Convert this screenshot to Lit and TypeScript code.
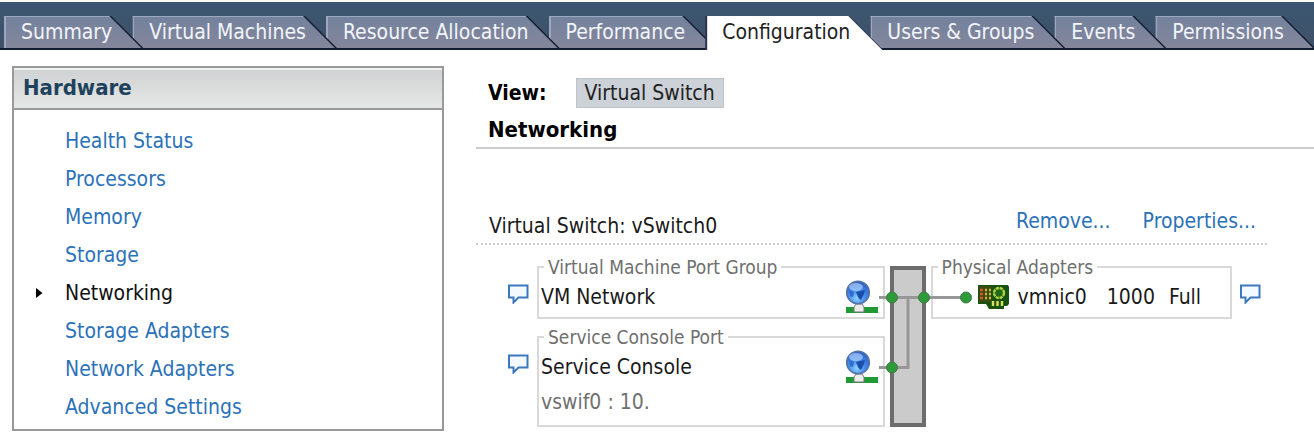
import { LitElement, html, css, svg } from "lit";
import { customElement, property, state } from "lit/decorators.js";
import { classMap } from "lit/directives/class-map.js";

const TABS = [
  "Summary",
  "Virtual Machines",
  "Resource Allocation",
  "Performance",
  "Configuration",
  "Users & Groups",
  "Events",
  "Permissions",
];

const HARDWARE = [
  "Health Status",
  "Processors",
  "Memory",
  "Storage",
  "Networking",
  "Storage Adapters",
  "Network Adapters",
  "Advanced Settings",
];

@customElement("tab-strip")
export class TabStrip extends LitElement {
  @property() selected = "Configuration";

  static styles = css`
    :host {
      display: block;
      padding-top: 14px;
      background: linear-gradient(#3b5671, #405168);
      overflow: hidden;
    }
    .strip {
      display: flex;
      padding-left: 4px;
      box-shadow: inset 0 -2px #151d30;
    }
    .tab {
      position: relative;
      isolation: isolate;
      flex: none;
      height: 34px;
      margin: 0 -13px 0 0;
      padding: 0 33px 2px 17px;
      border: 0;
      background: #151d30;
      color: #f2f5fa;
      font: inherit;
      line-height: 32px;
      white-space: nowrap;
      clip-path: polygon(0 0, calc(100% - 34px) 0, 100% 100%, 0 100%);
      cursor: pointer;
    }
    .tab::before {
      content: "";
      position: absolute;
      z-index: -1;
      inset: 0 4px 2px 0;
      border: solid #9aa8c0;
      border-width: 1px 0 0 2px;
      background: linear-gradient(#74829d, #84869b);
      clip-path: polygon(0 0, calc(100% - 32px) 0, 100% 100%, 0 100%);
    }
    .tab.active {
      background: #28344b;
      color: #222;
    }
    .tab.active::before {
      inset: 0 1px 0 2px;
      border: 0;
      background: #fff;
      clip-path: polygon(0 0, calc(100% - 34px) 0, 100% 100%, 0 100%);
    }
  `;

  render() {
    return html`<div class="strip" role="tablist">
      ${TABS.map((name, i) => {
        const active = name === this.selected;
        return html`<button
          class=${classMap({ tab: true, active })}
          role="tab"
          aria-selected=${active ? "true" : "false"}
          style="z-index:${active ? TABS.length + 1 : TABS.length - i}"
          @click=${() => this.dispatchEvent(new CustomEvent("pick", { detail: name }))}
        >${name}</button>`;
      })}
    </div>`;
  }
}

@customElement("hardware-menu")
export class HardwareMenu extends LitElement {
  @state() private current = "Networking";

  static styles = css`
    :host {
      display: block;
      border: 2px solid #999;
      background: #fff;
    }
    .title {
      margin: 0;
      padding: 0 9px;
      border-bottom: 2px solid #999;
      background: linear-gradient(#cfd2d2, #e6e7e7);
      box-shadow: inset 0 2px #f1f1f1;
      color: #1f425c;
      font-size: 22px;
      line-height: 40px;
    }
    .list {
      margin: 0;
      padding: 12px 0 3px;
      list-style: none;
    }
    .item {
      display: flex;
      align-items: center;
      height: 38px;
      padding-left: 22px;
    }
    .marker {
      width: 7px;
      height: 10px;
      margin-right: 22px;
      fill: #000;
    }
    .link {
      color: #2c72b8;
      text-decoration: none;
    }
    .current {
      color: #111;
    }
  `;

  render() {
    return html`<h2 class="title">Hardware</h2>
      <ul class="list">
        ${HARDWARE.map((name) => {
          const current = name === this.current;
          return html`<li class="item">
            <svg class="marker" viewBox="0 0 7 10" aria-hidden="true">
              ${current ? svg`<path d="M0 0L6.500 5L0 10Z"/>` : null}
            </svg>
            <a
              class=${classMap({ link: true, current })}
              href="#"
              @click=${(e: Event) => {
                e.preventDefault();
                this.current = name;
              }}
            >${name}</a>
          </li>`;
        })}
      </ul>`;
  }
}

const noteIcon = html`<svg width="21" height="20" viewBox="0 0 21 20" aria-hidden="true">
  <path d="M1 1.500H19.500V13.500H10.500L5.500 18.500V13.500H1Z" fill="#f3faff" stroke="#3c78bd" stroke-width="2"/>
</svg>`;

const globeIcon = html`<svg width="34" height="34" viewBox="0 0 34 34" aria-hidden="true">
  <defs>
    <radialGradient id="ball" cx=".45" cy=".75" r=".8">
      <stop offset="0" stop-color="#8fd2ff"/>
      <stop offset=".4" stop-color="#4a92ee"/>
      <stop offset="1" stop-color="#2456bd"/>
    </radialGradient>
  </defs>
  <rect x="1" y="27" width="32" height="6" fill="#1f9a35"/>
  <path d="M9 27L11 24H17L19 27V32H9Z" fill="#ececec" stroke="#777" stroke-width="1"/>
  <circle cx="13" cy="12.500" r="11.300" fill="url(#ball)" stroke="#5573a6" stroke-width="1.600"/>
  <ellipse cx="11" cy="7" rx="7" ry="4" fill="#bfdcff" opacity=".6"/>
  <path d="M4 10L9 12L8 17L5 16Z" fill="#2f6bcf"/>
  <path d="M11 12L20 10L19 14L16 20L13.500 18Z" fill="#1b4dab"/>
</svg>`;

const cardIcon = html`<svg width="33" height="26" viewBox="0 0 33 26" aria-hidden="true">
  <path d="M1 1H31L32 3V20L30 22H27V25H12L9 20H1Z" fill="#17520f"/>
  <path d="M2 2H14V18H2Z" fill="#3d4a12"/>
  <path d="M3 6H6M3 10H6M3 14H6" stroke="#d4562a" stroke-width="2.600"/>
  <path d="M8 6H10M12 6H14M8 10H10M12 10H14M8 14H10M12 14H14" stroke="#d0b93a" stroke-width="2.600"/>
  <circle cx="22" cy="9" r="5" fill="#226b16" stroke="#b2d044" stroke-width="2.400" stroke-dasharray="3.200 .73"/>
  <path d="M16 17V22M20.500 17V22M25 17V22" stroke="#d8e05c" stroke-width="2.400"/>
</svg>`;

@customElement("switch-diagram")
export class SwitchDiagram extends LitElement {
  static styles = css`
    :host {
      display: grid;
      grid-template-columns: 20px minmax(0, 7fr) 36px minmax(0, 6fr) 24px;
      column-gap: 5px;
      padding: 12px 6px 0 32px;
    }
    .groups {
      grid-column: 1 / 3;
      display: grid;
      grid-template-columns: 24px minmax(0, 1fr);
      column-gap: 5px;
      row-gap: 8px;
    }
    .note {
      display: flex;
      align-items: flex-start;
      padding: 27px 0 0;
      border: 0;
      background: none;
      cursor: pointer;
    }
    .note.end {
      justify-content: flex-end;
    }
    .box {
      min-width: 0;
      margin: 0;
      padding: 0 4px 0 2px;
      border: 2px solid #d9d9d9;
    }
    .caption {
      margin-left: 3px;
      padding: 0 4px;
      color: #6f6f6f;
      font-size: 19px;
      line-height: 20px;
    }
    .row {
      display: flex;
      align-items: center;
      justify-content: space-between;
      height: 40px;
    }
    .row svg {
      flex: none;
    }
    .detail {
      height: 38px;
      margin: 0;
      color: #707070;
      line-height: 30px;
    }
    .switch {
      position: relative;
      box-sizing: border-box;
      margin-top: 9px;
      border: 4px solid #6c6c6c;
      background: #cbcbcb;
    }
    .wires {
      position: absolute;
      left: -20px;
      top: -4px;
      z-index: 1;
    }
    .adapter {
      justify-content: flex-start;
      padding-left: 42px;
    }
    .adapter svg {
      margin-right: 8px;
    }
    .speed {
      margin: 0 14px 0 20px;
    }
  `;

  render() {
    return html`
      <div class="groups">
        <button class="note" aria-label="Port group details">${noteIcon}</button>
        <fieldset class="box">
          <legend class="caption">Virtual Machine Port Group</legend>
          <div class="row"><span>VM Network</span>${globeIcon}</div>
        </fieldset>
        <button class="note" aria-label="Console port details">${noteIcon}</button>
        <fieldset class="box">
          <legend class="caption">Service Console Port</legend>
          <div class="row"><span>Service Console</span>${globeIcon}</div>
          <p class="detail">vswif0 : 10.</p>
        </fieldset>
      </div>
      <div class="switch">
        <svg class="wires" width="100" height="120" viewBox="0 0 100 120" aria-hidden="true">
          <path d="M5 31.500H90M5 101.500H34V32" fill="none" stroke="#979797" stroke-width="3"/>
          <g fill="#2f9a3a" stroke="#44774a" stroke-width="1">
            <circle cx="18" cy="31.500" r="5.500"/>
            <circle cx="50" cy="31.500" r="5.500"/>
            <circle cx="92" cy="31.500" r="5.500"/>
            <circle cx="18" cy="101.500" r="5.500"/>
          </g>
        </svg>
      </div>
      <div>
        <fieldset class="box">
          <legend class="caption">Physical Adapters</legend>
          <div class="row adapter">${cardIcon}<span>vmnic0</span><span class="speed">1000</span><span>Full</span></div>
        </fieldset>
      </div>
      <button class="note end" aria-label="Adapter details">${noteIcon}</button>
    `;
  }
}

@customElement("app-root")
export class AppRoot extends LitElement {
  @state() private tab = "Configuration";

  static styles = css`
    :host {
      display: block;
      padding-top: 2px;
      background: #fff;
      color: #1a1a1a;
      font-family: "DejaVu Sans Condensed", "Noto Sans", sans-serif;
      font-size: 21px;
      line-height: 24px;
    }
    .page {
      display: flex;
      align-items: flex-start;
      gap: 32px;
      padding: 16px 0 0 12px;
    }
    .side {
      flex: 0 1 428px;
    }
    .main {
      flex: 1;
      min-width: 0;
    }
    .head {
      padding: 12px 12px 5px;
      border-bottom: 2px solid #ccc;
    }
    .view {
      display: flex;
      align-items: center;
      gap: 29px;
    }
    .label {
      color: #000;
      font-weight: bold;
    }
    .choice {
      height: 30px;
      padding: 0 8px;
      border: 1px solid #c0c4ca;
      background: #cdd1d8;
      color: #222;
      font: inherit;
      line-height: 26px;
    }
    .heading {
      margin: 0;
      padding-top: 10px;
      color: #000;
      font-size: 22px;
      line-height: 24px;
    }
    .vswitch {
      margin-right: 47px;
    }
    .bar {
      display: flex;
      align-items: flex-end;
      gap: 32px;
      padding: 60px 11px 5px 13px;
      border-bottom: 2px dotted #ccc;
    }
    .name {
      flex: 1;
      padding-top: 5px;
    }
    .action {
      padding-bottom: 5px;
      color: #2c72b8;
      text-decoration: none;
    }
  `;

  render() {
    return html`
      <tab-strip
        .selected=${this.tab}
        @pick=${(e: CustomEvent<string>) => (this.tab = e.detail)}
      ></tab-strip>
      <div class="page">
        <hardware-menu class="side"></hardware-menu>
        <main class="main">
          <header class="head">
            <div class="view">
              <label class="label" for="view">View:</label>
              <button class="choice" id="view">Virtual Switch</button>
            </div>
            <h1 class="heading">Networking</h1>
          </header>
          <section class="vswitch">
            <div class="bar">
              <span class="name">Virtual Switch: vSwitch0</span>
              <a class="action" href="#">Remove...</a>
              <a class="action" href="#">Properties...</a>
            </div>
            <switch-diagram></switch-diagram>
          </section>
        </main>
      </div>
    `;
  }
}
